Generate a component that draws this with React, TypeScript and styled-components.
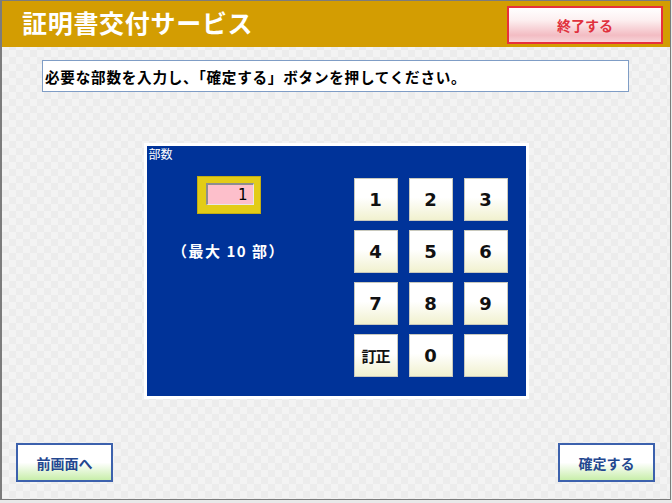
import styled, { createGlobalStyle } from "styled-components";

const GlobalStyle = createGlobalStyle`
  html, body {
    margin: 0;
    padding: 0;
    background: #e9e9e9;
  }
  * {
    box-sizing: border-box;
  }
`;

const KEYS = ["1", "2", "3", "4", "5", "6", "7", "8", "9", "訂正", "0", ""];

const App = () => {
  return (
    <>
      <GlobalStyle />
      <Frame>
        <Header>
          <Title>証明書交付サービス</Title>
          <ExitButton>終了する</ExitButton>
        </Header>
        <Prompt>必要な部数を入力し、「確定する」ボタンを押してください。</Prompt>
        <Panel>
          <PanelLabel>部数</PanelLabel>
          <PanelBody>
            <CountColumn>
              <InputFrame>
                <InputBox>1</InputBox>
              </InputFrame>
              <MaxNote>（最大 10 部）</MaxNote>
            </CountColumn>
            <Keypad>
              {KEYS.map((k, i) => (
                <Key key={i} $small={k.length > 1}>{k}</Key>
              ))}
            </Keypad>
          </PanelBody>
        </Panel>
        <Footer>
          <NavButton>前画面へ</NavButton>
          <NavButton>確定する</NavButton>
        </Footer>
      </Frame>
    </>
  );
};

const Frame = styled.div`
  width: 671px;
  height: 500px;
  display: flex;
  flex-direction: column;
  border: 1px solid #7c7c7c;
  border-left-width: 2px;
  background: repeating-conic-gradient(#ececec 0 25%, #f3f3f3 0 50%) 0 0 / 14px 14px;
  font-family: "Noto Sans CJK JP", "DejaVu Sans", sans-serif;
`;

const Header = styled.div`
  height: 46px;
  flex-shrink: 0;
  display: flex;
  align-items: center;
  justify-content: space-between;
  padding: 0 7px 0 20px;
  background: #d39d02;
`;

const Title = styled.h1`
  margin: 0 0 4px;
  color: #fff;
  font-size: 25px;
  font-weight: 700;
  letter-spacing: 0.7px;
  line-height: 1;
`;

const ExitButton = styled.div`
  width: 156px;
  height: 38px;
  display: flex;
  align-items: center;
  justify-content: center;
  border: 2px solid #e8303c;
  background: linear-gradient(#ffffff 0%, #fdf0f1 35%, #f3bcc3 80%, #f7d3d8 100%);
  color: #e0313d;
  font-size: 14px;
  font-weight: 700;
  margin-top: 2px;
`;

const Prompt = styled.div`
  width: 587px;
  height: 32px;
  margin: 13px 0 0 40px;
  padding: 0 2px;
  display: flex;
  align-items: center;
  background: #fff;
  border: 1px solid #7f9dc6;
  color: #000;
  font-size: 14.6px;
  font-weight: 700;
  letter-spacing: 0.75px;
`;

const Panel = styled.div`
  width: 385px;
  height: 256px;
  margin: 51px auto 0;
  border: 3px solid #fff;
  background: #003399;
`;

const PanelLabel = styled.div`
  height: 16px;
  padding: 1px 0 0 2px;
  color: #fff;
  font-size: 12px;
  line-height: 14px;
`;

const PanelBody = styled.div`
  display: flex;
  align-items: flex-start;
  padding: 16px 0 0 50px;
`;

const CountColumn = styled.div`
  width: 64px;
  display: flex;
  flex-direction: column;
  align-items: center;
`;

const InputFrame = styled.div`
  width: 64px;
  height: 38px;
  margin-top: -2px;
  padding: 6px 6px 8px 8px;
  background: #e3cc17;
  border: 1px solid #c2ad12;
`;

const InputBox = styled.div`
  width: 100%;
  height: 100%;
  padding-right: 5px;
  display: flex;
  align-items: center;
  justify-content: flex-end;
  background: #fdbfcb;
  border-top: 2px solid #8e8e8e;
  border-left: 2px solid #8e8e8e;
  border-right: 1px solid #e8e8e8;
  border-bottom: 1px solid #e8e8e8;
  color: #000;
  font-family: "DejaVu Sans", sans-serif;
  font-size: 15px;
`;

const MaxNote = styled.div`
  margin-top: 26px;
  white-space: nowrap;
  color: #fff;
  font-size: 15px;
  font-weight: 700;
  letter-spacing: 1.5px;
`;

const Keypad = styled.div`
  margin-left: 93px;
  display: grid;
  grid-template-columns: repeat(3, 44px);
  grid-auto-rows: 43px;
  column-gap: 11px;
  row-gap: 9px;
`;

const Key = styled.div<{ $small?: boolean }>`
  display: flex;
  align-items: center;
  justify-content: center;
  background: linear-gradient(#ffffff 0%, #ffffff 45%, #f1f1cf 100%);
  border: 1px solid #c9c9bd;
  color: #111;
  font-family: "DejaVu Sans", "Noto Sans CJK JP", sans-serif;
  font-size: ${(p) => (p.$small ? "15px" : "18px")};
  font-weight: 700;
  letter-spacing: ${(p) => (p.$small ? "-1px" : "0")};
`;

const Footer = styled.div`
  margin-top: auto;
  display: flex;
  justify-content: space-between;
  padding: 0 15px 17px 14px;
`;

const NavButton = styled.div`
  width: 97px;
  height: 39px;
  display: flex;
  align-items: center;
  justify-content: center;
  border: 2px solid #3c61ad;
  background: linear-gradient(#ffffff 0%, #ffffff 50%, #c8eeaa 100%);
  color: #234790;
  font-size: 14px;
  font-weight: 700;
`;

export default App;
